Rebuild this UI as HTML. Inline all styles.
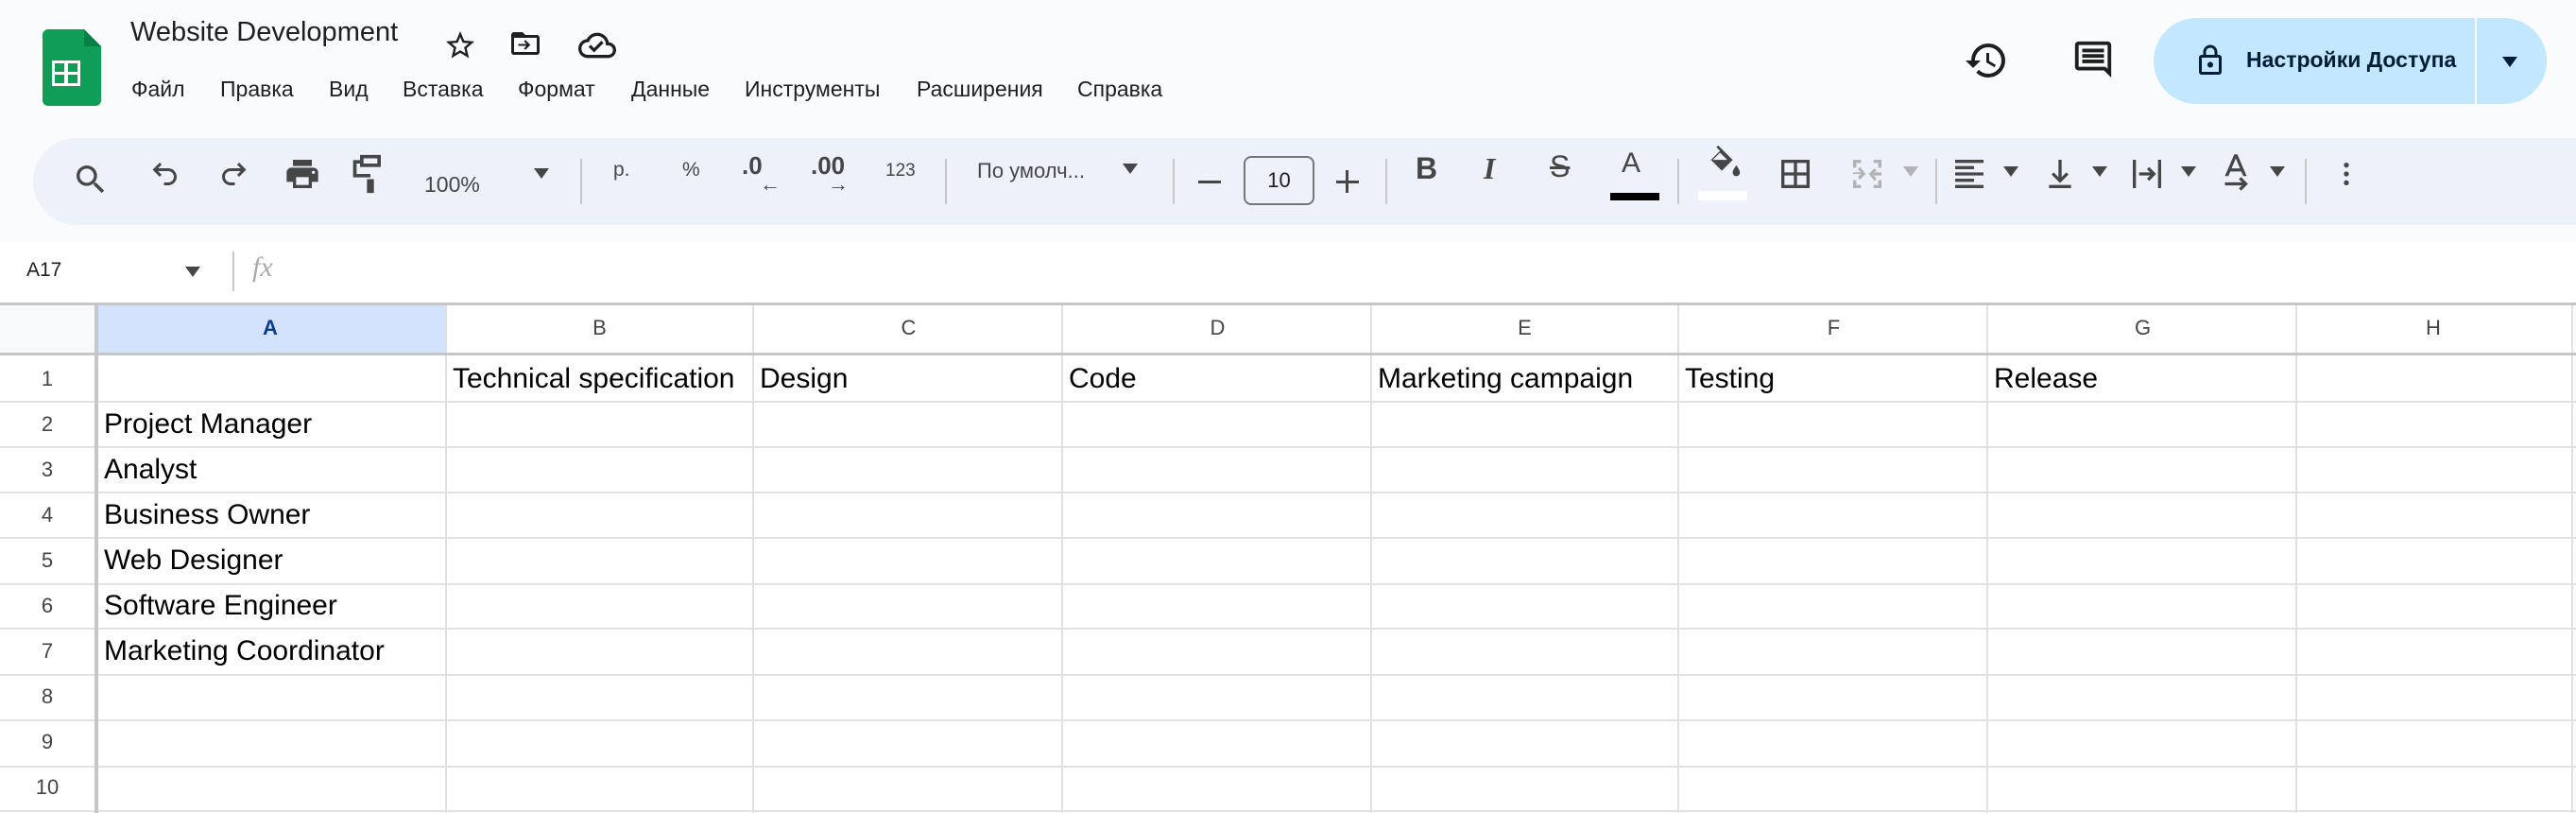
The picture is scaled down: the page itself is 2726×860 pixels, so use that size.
<!DOCTYPE html>
<html><head><meta charset="utf-8"><style>
*{margin:0;padding:0;box-sizing:border-box}
body{width:2726px;height:860px;overflow:hidden;background:#f9fbfd;font-family:"Liberation Sans",Arial,sans-serif;position:relative;color:#1f1f1f}
.a{position:absolute}
.menu{position:absolute;top:81px;font-size:23px;color:#1f1f1f}
.tb{position:absolute;left:35px;top:146px;width:2760px;height:92px;background:#edf2fa;border-radius:46px}
.ic{position:absolute;fill:#444746}
.sep{position:absolute;top:168px;width:2px;height:48px;background:#c7c7c7}
.tt{position:absolute;color:#444746;font-size:21px}
.tri{position:absolute;width:0;height:0;border-left:8px solid transparent;border-right:8px solid transparent;border-top:11px solid #444746}
.hl{position:absolute;left:0;width:2726px;height:2px;background:#e1e1e1}
.vl{position:absolute;top:322px;width:2px;height:538px;background:#e1e1e1}
.ch{position:absolute;top:334px;font-size:22px;color:#444;text-align:center;width:327px}
.rn{position:absolute;left:0;width:100px;text-align:center;font-size:22px;color:#444}
.ct{position:absolute;font-size:30px;color:#000}
</style></head><body>
<svg class="a" style="left:45px;top:31px" width="62" height="81" viewBox="0 0 62 81"><path d="M6 0h38l18 18v57a6 6 0 0 1-6 6H6a6 6 0 0 1-6-6V6a6 6 0 0 1 6-6z" fill="#0f9d58"/><path d="M44 0l18 18H44z" fill="#087f45"/><rect x="10" y="33" width="30" height="27" fill="#fff"/><rect x="13" y="36" width="10" height="9" fill="#0f9d58"/><rect x="27" y="36" width="10" height="9" fill="#0f9d58"/><rect x="13" y="48" width="10" height="9" fill="#0f9d58"/><rect x="27" y="48" width="10" height="9" fill="#0f9d58"/></svg>
<div class="a" style="left:138px;top:18px;font-size:29px;color:#1f1f1f">Website Development</div>
<svg class="ic" style="left:469px;top:30px;fill:#1f1f1f" width="36" height="36" viewBox="0 0 24 24"><path d="M22 9.24l-7.19-.62L12 2 9.19 8.63 2 9.24l5.46 4.73L5.820 21 12 17.27 18.18 21l-1.63-7.03L22 9.24zM12 15.4l-3.76 2.27 1-4.280-3.32-2.88 4.38-.38L12 6.1l1.71 4.04 4.38.38-3.32 2.88 1 4.28L12 15.4z"/></svg>
<svg class="ic" style="left:538px;top:28px;fill:#1f1f1f" width="36" height="36" viewBox="0 0 24 24"><path d="M20 6h-8l-2-2H4c-1.1 0-2 .9-2 2v12c0 1.1.9 2 2 2h16c1.1 0 2-.9 2-2V8c0-1.1-.9-2-2-2zm0 12H4V8h16v10zM12 9.5l-1 1 1.8 1.8H7v1.4h5.8L11 15.5l1 1 3.5-3.5z"/></svg>
<svg class="ic" style="left:612px;top:28px;fill:#1f1f1f" width="40" height="40" viewBox="0 0 24 24"><path d="M19.35 10.04A7.49 7.49 0 0 0 12 4C9.11 4 6.6 5.64 5.35 8.04A5.994 5.994 0 0 0 0 14c0 3.31 2.69 6 6 6h13c2.76 0 5-2.24 5-5 0-2.64-2.05-4.78-4.65-4.96zM19 18H6c-2.21 0-4-1.79-4-4s1.79-4 4-4h.71C7.37 7.69 9.48 6 12 6c3.04 0 5.5 2.46 5.5 5.5v.5H19c1.66 0 3 1.34 3 3s-1.34 3-3 3zm-9-1.5L6.5 13l1.4-1.4 2.1 2.1 4.6-4.6 1.4 1.4z"/></svg>
<div class="menu" style="left:139px">Файл</div>
<div class="menu" style="left:233px">Правка</div>
<div class="menu" style="left:348px">Вид</div>
<div class="menu" style="left:426px">Вставка</div>
<div class="menu" style="left:548px">Формат</div>
<div class="menu" style="left:668px">Данные</div>
<div class="menu" style="left:788px">Инструменты</div>
<div class="menu" style="left:970px">Расширения</div>
<div class="menu" style="left:1140px">Справка</div>
<svg class="ic" style="left:2078px;top:40px;fill:#1f1f1f" width="48" height="48" viewBox="0 0 24 24"><path d="M13 3a9 9 0 0 0-9 9H1l3.89 3.89.07.14L9 12H6c0-3.87 3.13-7 7-7s7 3.13 7 7-3.13 7-7 7c-1.930 0-3.68-.79-4.94-2.06l-1.42 1.42A8.954 8.954 0 0 0 13 21a9 9 0 0 0 0-18zm-1 5v5l4.28 2.54.72-1.21-3.5-2.080V8H12z"/></svg>
<svg class="ic" style="left:2192px;top:40px;fill:#1f1f1f" width="46" height="46" viewBox="0 0 24 24"><path d="M21.99 4c0-1.1-.89-2-1.99-2H4c-1.1 0-2 .9-2 2v12c0 1.1.9 2 2 2h14l4 4-.01-18zM20 4v13.17L18.83 16H4V4h16zM6 12h12v2H6zm0-3h12v2H6zm0-3h12v2H6z"/></svg>
<div class="a" style="left:2279px;top:19px;width:416px;height:91px;background:#c2e7ff;border-radius:46px"></div>
<div class="a" style="left:2619px;top:19px;width:2px;height:91px;background:#f9fbfd"></div>
<svg class="ic" style="left:2321px;top:44px;fill:#001d35" width="36" height="40" viewBox="0 0 24 24"><path d="M18 8h-1V6c0-2.76-2.24-5-5-5S7 3.24 7 6v2H6c-1.1 0-2 .9-2 2v10c0 1.1.9 2 2 2h12c1.1 0 2-.9 2-2V10c0-1.1-.9-2-2-2zM9 6c0-1.66 1.34-3 3-3s3 1.34 3 3v2H9V6zm9 14H6V10h12v10zm-6-3c1.1 0 2-.9 2-2s-.9-2-2-2-2 .9-2 2 .9 2 2 2z"/></svg>
<div class="a" style="left:2377px;top:50px;font-size:23px;font-weight:bold;color:#001d35">Настройки Доступа</div>
<div class="tri" style="left:2648px;top:60px;border-top-color:#001d35"></div>
<div class="tb"></div>
<svg class="ic" style="left:76px;top:170px" width="40" height="40" viewBox="0 0 24 24"><path d="M15.5 14h-.79l-.28-.27A6.47 6.47 0 0 0 16 9.5 6.5 6.5 0 1 0 9.5 16c1.61 0 3.09-.59 4.23-1.57l.27.28v.79l5 4.99L20.49 19l-4.99-5zm-6 0C7.01 14 5 11.99 5 9.5S7.01 5 9.5 5 14 7.01 14 9.5 11.99 14 9.5 14z"/></svg>
<svg class="ic" style="left:157px;top:166px" width="36" height="36" viewBox="0 0 24 24"><path d="M8 4L3 9l5 5 1.4-1.4L6.8 10H14c2.2 0 4 1.8 4 4s-1.8 4-4 4h-3v2h3c3.3 0 6-2.7 6-6s-2.7-6-6-6H6.8l2.6-2.6z"/></svg>
<svg class="ic" style="left:229px;top:166px" width="36" height="36" viewBox="0 0 24 24"><path d="M16 4l5 5-5 5-1.4-1.4 2.6-2.6H10c-2.2 0-4 1.8-4 4s1.8 4 4 4h3v2h-3c-3.3 0-6-2.7-6-6s2.7-6 6-6h7.2l-2.6-2.6z"/></svg>
<svg class="ic" style="left:300px;top:164px" width="40" height="40" viewBox="0 0 24 24"><path d="M19 8H5c-1.66 0-3 1.34-3 3v6h4v4h12v-4h4v-6c0-1.66-1.34-3-3-3zm-3 11H8v-5h8v5zm3-7c-.55 0-1-.45-1-1s.45-1 1-1 1 .45 1 1-.45 1-1 1zm-1-9H6v4h12V3z"/></svg>
<svg class="ic" style="left:373px;top:162px" width="38" height="44" viewBox="0 0 20 24"><path d="M4 1h12v7H4zM6 3v3h8V3zM2 4h2v2H2v6h8v3h2v8H8v-8h2v-1H0V4z"/></svg>
<div class="tt" style="left:449px;top:182px;font-size:23px">100%</div>
<div class="tri" style="left:565px;top:178px"></div>
<div class="sep" style="left:614px"></div>
<div class="tt" style="left:649px;top:168px">р.</div>
<div class="tt" style="left:722px;top:168px">%</div>
<div class="tt" style="left:785px;top:160px;font-size:26px;font-weight:bold">.0</div>
<div class="tt" style="left:804px;top:182px;font-size:22px;font-weight:bold">←</div>
<div class="tt" style="left:858px;top:160px;font-size:26px;font-weight:bold">.00</div>
<div class="tt" style="left:876px;top:182px;font-size:22px;font-weight:bold">→</div>
<div class="tt" style="left:937px;top:170px;font-size:19px">123</div>
<div class="sep" style="left:1000px"></div>
<div class="tt" style="left:1034px;top:168px;font-size:22px">По умолч...</div>
<div class="tri" style="left:1188px;top:173px"></div>
<div class="sep" style="left:1241px"></div>
<div class="a" style="left:1268px;top:191px;width:24px;height:3px;background:#444746"></div>
<div class="a" style="left:1316px;top:165px;width:75px;height:52px;border:2px solid #747775;border-radius:8px;font-size:22px;color:#1f1f1f;text-align:center;line-height:48px">10</div>
<div class="a" style="left:1414px;top:191px;width:24px;height:3px;background:#444746"></div>
<div class="a" style="left:1424px;top:180px;width:3px;height:24px;background:#444746"></div>
<div class="sep" style="left:1466px"></div>
<div class="tt" style="left:1498px;top:160px;font-size:32px;font-weight:bold">B</div>
<div class="tt" style="left:1570px;top:160px;font-size:32px;font-style:italic;font-family:'Liberation Serif',serif;font-weight:bold">I</div>
<div class="tt" style="left:1640px;top:158px;font-size:32px;text-decoration:line-through">S</div>
<div class="tt" style="left:1716px;top:156px;font-size:30px">A</div>
<div class="a" style="left:1704px;top:204px;width:52px;height:8px;background:#000"></div>
<div class="sep" style="left:1775px"></div>
<svg class="ic" style="left:1804px;top:150px" width="40" height="46" viewBox="0 0 20 24"><path d="M7 2l8 8-6 6-6-6 5-5-2-2zm1 4l-4 4h8zM17 13s-2 2.5-2 4a2 2 0 0 0 4 0c0-1.5-2-4-2-4z"/></svg>
<div class="a" style="left:1797px;top:202px;width:52px;height:10px;background:#fff"></div>
<svg class="ic" style="left:1880px;top:164px" width="40" height="40" viewBox="0 0 24 24"><path d="M3 3v18h18V3H3zm8 16H5v-6h6v6zm0-8H5V5h6v6zm8 8h-6v-6h6v6zm0-8h-6V5h6v6z"/></svg>
<svg class="ic" style="left:1956px;top:164px;fill:#b1b3b6" width="40" height="40" viewBox="0 0 24 24"><path d="M3 3h5v2H5v3H3zm13 0h5v5h-2V5h-3zM3 16h2v3h3v2H3zm16 0h2v5h-5v-2h3zM3 11h5l-2-2 1.4-1.4L11 12l-3.6 3.6L6 14l2-2H3zm18 0v2h-5l2 2-1.4 1.4L13 12l3.6-3.6L18 10l-2 1z"/></svg>
<div class="tri" style="left:2014px;top:176px;border-top-color:#b1b3b6"></div>
<div class="sep" style="left:2048px"></div>
<svg class="ic" style="left:2064px;top:164px" width="40" height="40" viewBox="0 0 24 24"><path d="M3 3h18v2H3zm0 4h12v2H3zm0 4h18v2H3zm0 4h12v2H3zm0 4h18v2H3z"/></svg>
<div class="tri" style="left:2120px;top:176px"></div>
<svg class="ic" style="left:2160px;top:164px" width="40" height="40" viewBox="0 0 24 24"><path d="M11 3h2v11l3-3 1.4 1.4L12 17.8l-5.4-5.4L8 11l3 3zM5 19h14v2H5z"/></svg>
<div class="tri" style="left:2214px;top:176px"></div>
<svg class="ic" style="left:2252px;top:164px" width="40" height="40" viewBox="0 0 24 24"><path d="M3 3h2v18H3zm16 0h2v18h-2zM7 11h7l-2-2 1.4-1.4L17.8 12l-4.4 4.4L12 15l2-2H7z"/></svg>
<div class="tri" style="left:2308px;top:176px"></div>
<svg class="ic" style="left:2346px;top:160px" width="40" height="46" viewBox="0 0 24 28"><path d="M11 2h2l6 14h-2.2l-1.3-3h-7l-1.3 3H5zm-1.7 9h5.4L12 4.6zM5 20h11l-2-2 1.4-1.4L19.8 21l-4.4 4.4L14 24l2-2H5z"/></svg>
<div class="tri" style="left:2402px;top:176px"></div>
<div class="sep" style="left:2439px"></div>
<svg class="ic" style="left:2467px;top:164px" width="32" height="40" viewBox="0 0 24 24"><circle cx="12" cy="5" r="2"/><circle cx="12" cy="12" r="2"/><circle cx="12" cy="19" r="2"/></svg>
<div class="a" style="left:0;top:256px;width:2726px;height:66px;background:#fff"></div>
<div class="a" style="left:28px;top:274px;font-size:21px;color:#1f1f1f">A17</div>
<div class="tri" style="left:196px;top:282px;border-top-color:#444746"></div>
<div class="a" style="left:246px;top:266px;width:2px;height:42px;background:#c7c7c7"></div>
<div class="a" style="left:267px;top:266px;font-size:30px;color:#aaa;font-style:italic;font-family:'Liberation Serif',serif">fx</div>
<div class="a" style="left:0;top:322px;width:2726px;height:538px;background:#fff"></div>
<div class="a" style="left:0;top:322px;width:100px;height:53px;background:#f8f9fa"></div>
<div class="a" style="left:103px;top:322px;width:368px;height:53px;background:#d3e3fd"></div>
<div class="vl" style="left:471px"></div><div class="vl" style="left:796px"></div><div class="vl" style="left:1123px"></div><div class="vl" style="left:1450px"></div><div class="vl" style="left:1775px"></div><div class="vl" style="left:2102px"></div><div class="vl" style="left:2429px"></div><div class="vl" style="left:2721px"></div>
<div class="hl" style="top:424px"></div><div class="hl" style="top:472px"></div><div class="hl" style="top:520px"></div><div class="hl" style="top:568px"></div><div class="hl" style="top:617px"></div><div class="hl" style="top:664px"></div><div class="hl" style="top:713px"></div><div class="hl" style="top:761px"></div><div class="hl" style="top:810px"></div><div class="hl" style="top:857px"></div>
<div class="a" style="left:0;top:320px;width:2726px;height:3px;background:#c4c7c5"></div>
<div class="a" style="left:0;top:373px;width:2726px;height:3px;background:#c4c7c5"></div>
<div class="a" style="left:100px;top:322px;width:4px;height:538px;background:#c4c7c5"></div>
<div class="ch" style="left:121px;width:330px;font-weight:bold;color:#0b3d91">A</div>
<div class="ch" style="left:471px">B</div><div class="ch" style="left:798px">C</div><div class="ch" style="left:1125px">D</div><div class="ch" style="left:1450px">E</div><div class="ch" style="left:1777px">F</div><div class="ch" style="left:2104px">G</div><div class="ch" style="left:2429px;width:292px">H</div>
<div class="rn" style="top:388px">1</div><div class="rn" style="top:436px">2</div><div class="rn" style="top:484px">3</div><div class="rn" style="top:532px">4</div><div class="rn" style="top:580px">5</div><div class="rn" style="top:628px">6</div><div class="rn" style="top:676px">7</div><div class="rn" style="top:724px">8</div><div class="rn" style="top:772px">9</div><div class="rn" style="top:820px">10</div>
<div class="ct" style="left:479px;top:384px">Technical specification</div>
<div class="ct" style="left:804px;top:384px">Design</div>
<div class="ct" style="left:1131px;top:384px">Code</div>
<div class="ct" style="left:1458px;top:384px">Marketing campaign</div>
<div class="ct" style="left:1783px;top:384px">Testing</div>
<div class="ct" style="left:2110px;top:384px">Release</div>
<div class="ct" style="left:110px;top:432px">Project Manager</div>
<div class="ct" style="left:110px;top:480px">Analyst</div>
<div class="ct" style="left:110px;top:528px">Business Owner</div>
<div class="ct" style="left:110px;top:576px">Web Designer</div>
<div class="ct" style="left:110px;top:624px">Software Engineer</div>
<div class="ct" style="left:110px;top:672px">Marketing Coordinator</div>
</body></html>
